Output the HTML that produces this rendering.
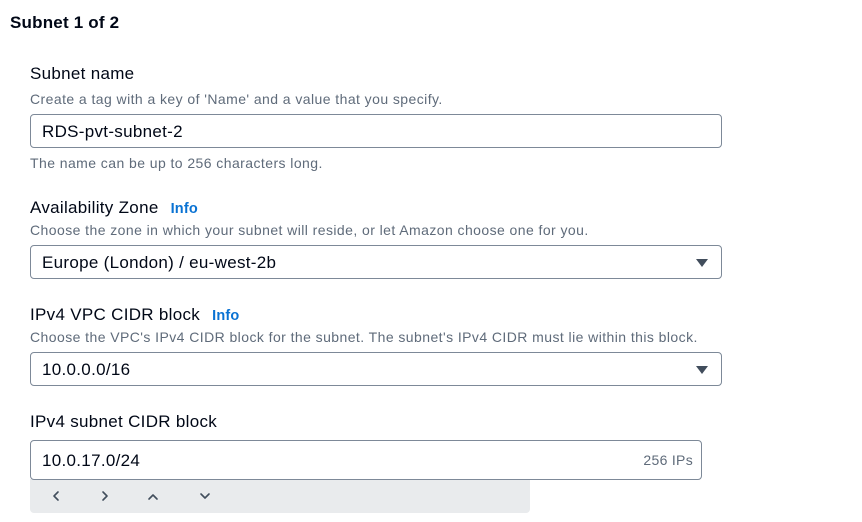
<!DOCTYPE html>
<html><head><meta charset="utf-8"><style>
*{margin:0;padding:0;box-sizing:border-box}
body{width:862px;height:522px;background:#fff;font-family:"Liberation Sans",Arial,sans-serif;color:#000716;position:relative;overflow:hidden}
.a{position:absolute;white-space:nowrap}
h1{position:absolute;left:10px;top:13px;font-size:17px;font-weight:bold;color:#000716;letter-spacing:0.2px}
.lab{font-size:17px;color:#000716;letter-spacing:0.3px}
.info{font-size:14.5px;font-weight:bold;color:#0972d3;margin-left:12px;letter-spacing:0.2px}
.desc{font-size:14px;color:#5f6b7a;letter-spacing:0.43px}
.box{position:absolute;left:30px;width:692px;height:34px;border:1px solid #7d8998;border-radius:4px;background:#fff;font-size:17px;padding-left:11px;line-height:33px;letter-spacing:0.3px}
.tri{position:absolute;right:13px;top:13px;width:0;height:0;border-left:6px solid transparent;border-right:6px solid transparent;border-top:8px solid #414d5c}
</style></head><body>
<h1>Subnet 1 of 2</h1>
<div class="a lab" style="left:30px;top:64px">Subnet name</div>
<div class="a desc" style="left:30px;top:91px">Create a tag with a key of 'Name' and a value that you specify.</div>
<div class="box" style="top:114px">RDS-pvt-subnet-2</div>
<div class="a desc" style="left:30px;top:155px">The name can be up to 256 characters long.</div>

<div class="a lab" style="left:30px;top:198px">Availability Zone<span class="info">Info</span></div>
<div class="a desc" style="left:30px;top:222px">Choose the zone in which your subnet will reside, or let Amazon choose one for you.</div>
<div class="box" style="top:245px">Europe (London) / eu-west-2b<div class="tri"></div></div>

<div class="a lab" style="left:30px;top:305px">IPv4 VPC CIDR block<span class="info">Info</span></div>
<div class="a desc" style="left:30px;top:329px">Choose the VPC's IPv4 CIDR block for the subnet. The subnet's IPv4 CIDR must lie within this block.</div>
<div class="box" style="top:352px">10.0.0.0/16<div class="tri"></div></div>

<div class="a lab" style="left:30px;top:412px">IPv4 subnet CIDR block</div>
<div style="position:absolute;left:30px;top:479px;width:500px;height:34px;background:#e9ebed;border-radius:0 0 4px 4px"></div>
<div class="box" style="top:440px;width:672px;height:40px;line-height:39px">10.0.17.0/24<span style="position:absolute;right:8px;font-size:14px;color:#5f6b7a;letter-spacing:0.3px">256 IPs</span></div>
<svg class="a" style="left:30px;top:479px" width="220" height="34" fill="none" stroke="#414d5c" stroke-width="1.6" stroke-linecap="round" stroke-linejoin="round">
<path d="M28 13l-4 4 4 4"/><path d="M73 13l4 4-4 4"/><path d="M119 20l4-4 4 4"/><path d="M171 15l4 4 4-4"/>
</svg>
</body></html>
